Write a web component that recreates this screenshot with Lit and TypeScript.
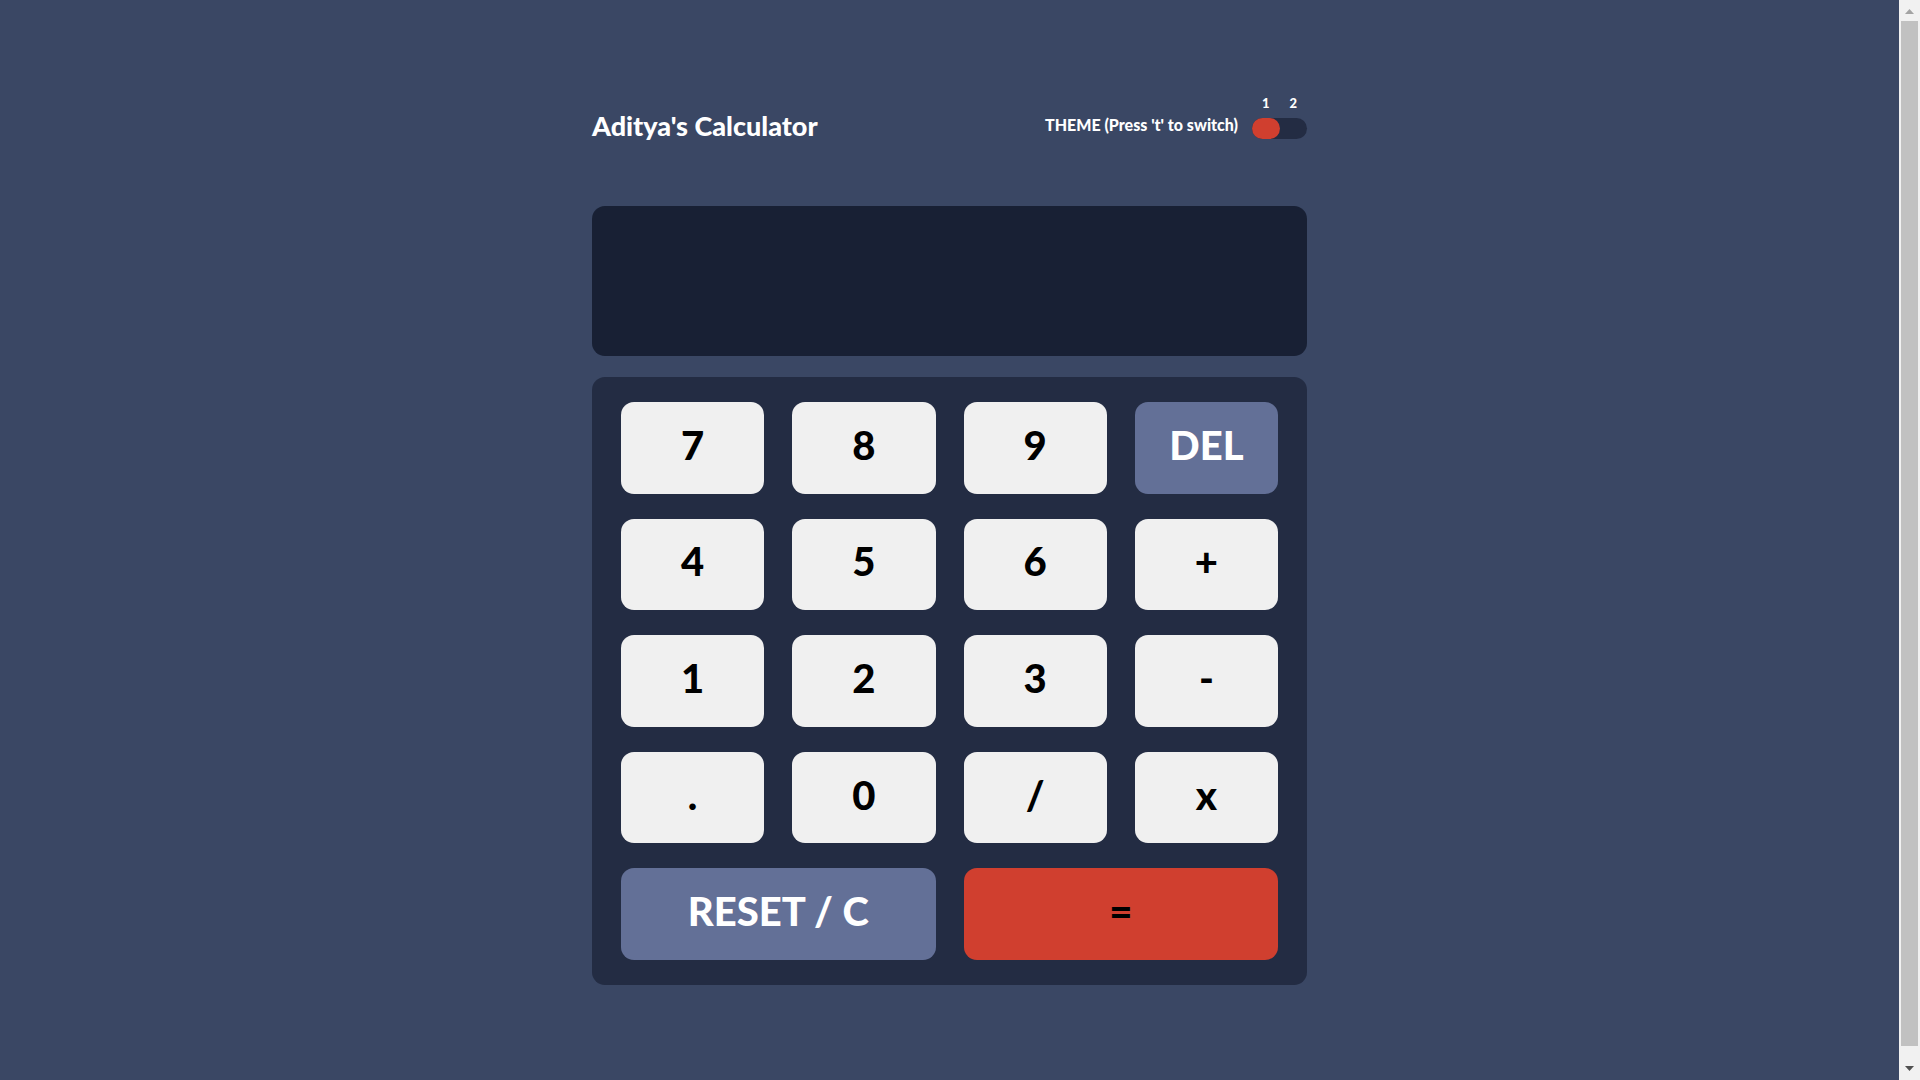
import { LitElement, html, css } from "lit";
import { customElement, state } from "lit/decorators.js";
import { classMap } from "lit/directives/class-map.js";

type Key = { label: string; kind?: "action" | "equals"; wide?: boolean };

const KEYS: Key[] = [
  { label: "7" }, { label: "8" }, { label: "9" }, { label: "DEL", kind: "action" },
  { label: "4" }, { label: "5" }, { label: "6" }, { label: "+" },
  { label: "1" }, { label: "2" }, { label: "3" }, { label: "-" },
  { label: "." }, { label: "0" }, { label: "/" }, { label: "x" },
  { label: "RESET / C", kind: "action", wide: true },
  { label: "=", kind: "equals", wide: true },
];

@customElement("app-root")
export class AppRoot extends LitElement {
  @state() private entry = "";
  @state() private light = false;

  static styles = css`
    :host {
      display: block;
      font-family: Lato, "Open Sans", sans-serif;
      font-weight: 900;
    }
    .page {
      --page: #3a4764;
      --screen: #182034;
      --pad: #232c43;
      --key: #f0f0f0;
      --key-text: #000;
      --action: #637097;
      --accent: #d03f2f;
      --text: #fff;
      display: flex;
      height: 100vh;
      background: var(--page);
      color: var(--text);
    }
    .page.light {
      --page: #e6e6e6;
      --screen: #eeeeee;
      --pad: #d2cdcd;
      --action: #378187;
      --accent: #c85402;
      --text: #35352c;
    }
    main {
      flex: 1;
      box-sizing: border-box;
      min-width: 0;
      padding: 96px 24px 0;
      overflow: hidden;
    }
    .calculator {
      display: flex;
      flex-direction: column;
      max-width: 715px;
      margin: 0 auto;
    }
    header {
      display: flex;
      justify-content: space-between;
      align-items: flex-end;
      margin-bottom: 67px;
    }
    h1 {
      margin: 0;
      font-size: 27px;
      line-height: 26px;
      font-weight: 900;
    }
    .theme {
      display: flex;
      align-items: flex-end;
      gap: 14px;
    }
    .theme label {
      font-size: 16px;
      line-height: 28px;
    }
    .switch {
      display: flex;
      flex-direction: column;
      gap: 8px;
      width: 55px;
    }
    .marks {
      display: flex;
      justify-content: space-around;
      font-size: 13px;
      line-height: 14px;
    }
    .toggle {
      display: flex;
      appearance: none;
      width: 100%;
      height: 21px;
      margin: 0;
      border-radius: 12px;
      background: var(--pad);
      cursor: pointer;
    }
    .toggle::before {
      content: "";
      width: 28px;
      border-radius: 12px;
      background: var(--accent);
    }
    .toggle:checked {
      justify-content: flex-end;
    }
    .screen {
      display: flex;
      align-items: center;
      justify-content: flex-end;
      box-sizing: border-box;
      min-height: 150px;
      margin-bottom: 21px;
      padding: 0 28px;
      border-radius: 13px;
      background: var(--screen);
      font-size: 56px;
      overflow: hidden;
    }
    .keypad {
      display: grid;
      grid-template-columns: repeat(4, 1fr);
      grid-auto-rows: 1fr;
      gap: 25px 28px;
      box-sizing: border-box;
      min-height: 608px;
      padding: 25px 29px;
      border-radius: 13px;
      background: var(--pad);
    }
    .key {
      padding: 0 0 6px;
      border: 0;
      border-radius: 13px;
      background: var(--key);
      color: var(--key-text);
      font: inherit;
      font-size: 40px;
      cursor: pointer;
    }
    .wide {
      grid-column: span 2;
    }
    .action {
      background: var(--action);
      color: #fff;
    }
    .equals {
      background: var(--accent);
    }
    .scrollbar {
      display: flex;
      flex-direction: column;
      width: 21px;
      background: #f1f1f1;
    }
    .scrollbar svg {
      display: block;
      width: 21px;
      height: 21px;
    }
    .thumb {
      flex: 1;
      margin: 0 2px 13px;
      background: #c1c1c1;
    }
  `;

  connectedCallback() {
    super.connectedCallback();
    window.addEventListener("keydown", this.onKeydown);
  }

  disconnectedCallback() {
    window.removeEventListener("keydown", this.onKeydown);
    super.disconnectedCallback();
  }

  private onKeydown = (e: KeyboardEvent) => {
    if (e.key === "t") this.light = !this.light;
  };

  private press(label: string) {
    if (label === "DEL") this.entry = this.entry.slice(0, -1);
    else if (label === "RESET / C") this.entry = "";
    else if (label === "=") this.entry = this.evaluate(this.entry);
    else this.entry += label;
  }

  // Products first, then sums; a malformed entry is left as typed.
  private evaluate(source: string): string {
    const tokens = source.match(/\d*\.?\d+|[-+x/]/g);
    if (!tokens || tokens.length % 2 === 0) return source;
    const terms: number[] = [Number(tokens[0])];
    for (let i = 1; i < tokens.length; i += 2) {
      const value = Number(tokens[i + 1]);
      const last = terms.length - 1;
      if (tokens[i] === "x") terms[last] *= value;
      else if (tokens[i] === "/") terms[last] /= value;
      else terms.push(tokens[i] === "-" ? -value : value);
    }
    const total = terms.reduce((a, b) => a + b, 0);
    return Number.isFinite(total) ? String(total) : source;
  }

  render() {
    return html`
      <div class=${classMap({ page: true, light: this.light })}>
        <main>
          <div class="calculator">
            <header>
              <h1>Aditya's Calculator</h1>
              <div class="theme">
                <label for="theme">THEME (Press 't' to switch)</label>
                <div class="switch">
                  <div class="marks"><span>1</span><span>2</span></div>
                  <input
                    class="toggle"
                    id="theme"
                    type="checkbox"
                    .checked=${this.light}
                    @change=${() => (this.light = !this.light)}
                  />
                </div>
              </div>
            </header>
            <output class="screen">${this.entry}</output>
            <div class="keypad">
              ${KEYS.map(
                (k) => html`<button
                  type="button"
                  class=${classMap({
                    key: true,
                    wide: !!k.wide,
                    action: k.kind === "action",
                    equals: k.kind === "equals",
                  })}
                  @click=${() => this.press(k.label)}
                >${k.label}</button>`
              )}
            </div>
          </div>
        </main>
        <div class="scrollbar" aria-hidden="true">
          <svg viewBox="0 0 21 21"><path d="M6 14 L10.500 9 L15 14 Z" fill="#a3a3a3" /></svg>
          <div class="thumb"></div>
          <svg viewBox="0 0 21 21"><path d="M6 7 L15 7 L10.500 12 Z" fill="#505050" /></svg>
        </div>
      </div>
    `;
  }
}
